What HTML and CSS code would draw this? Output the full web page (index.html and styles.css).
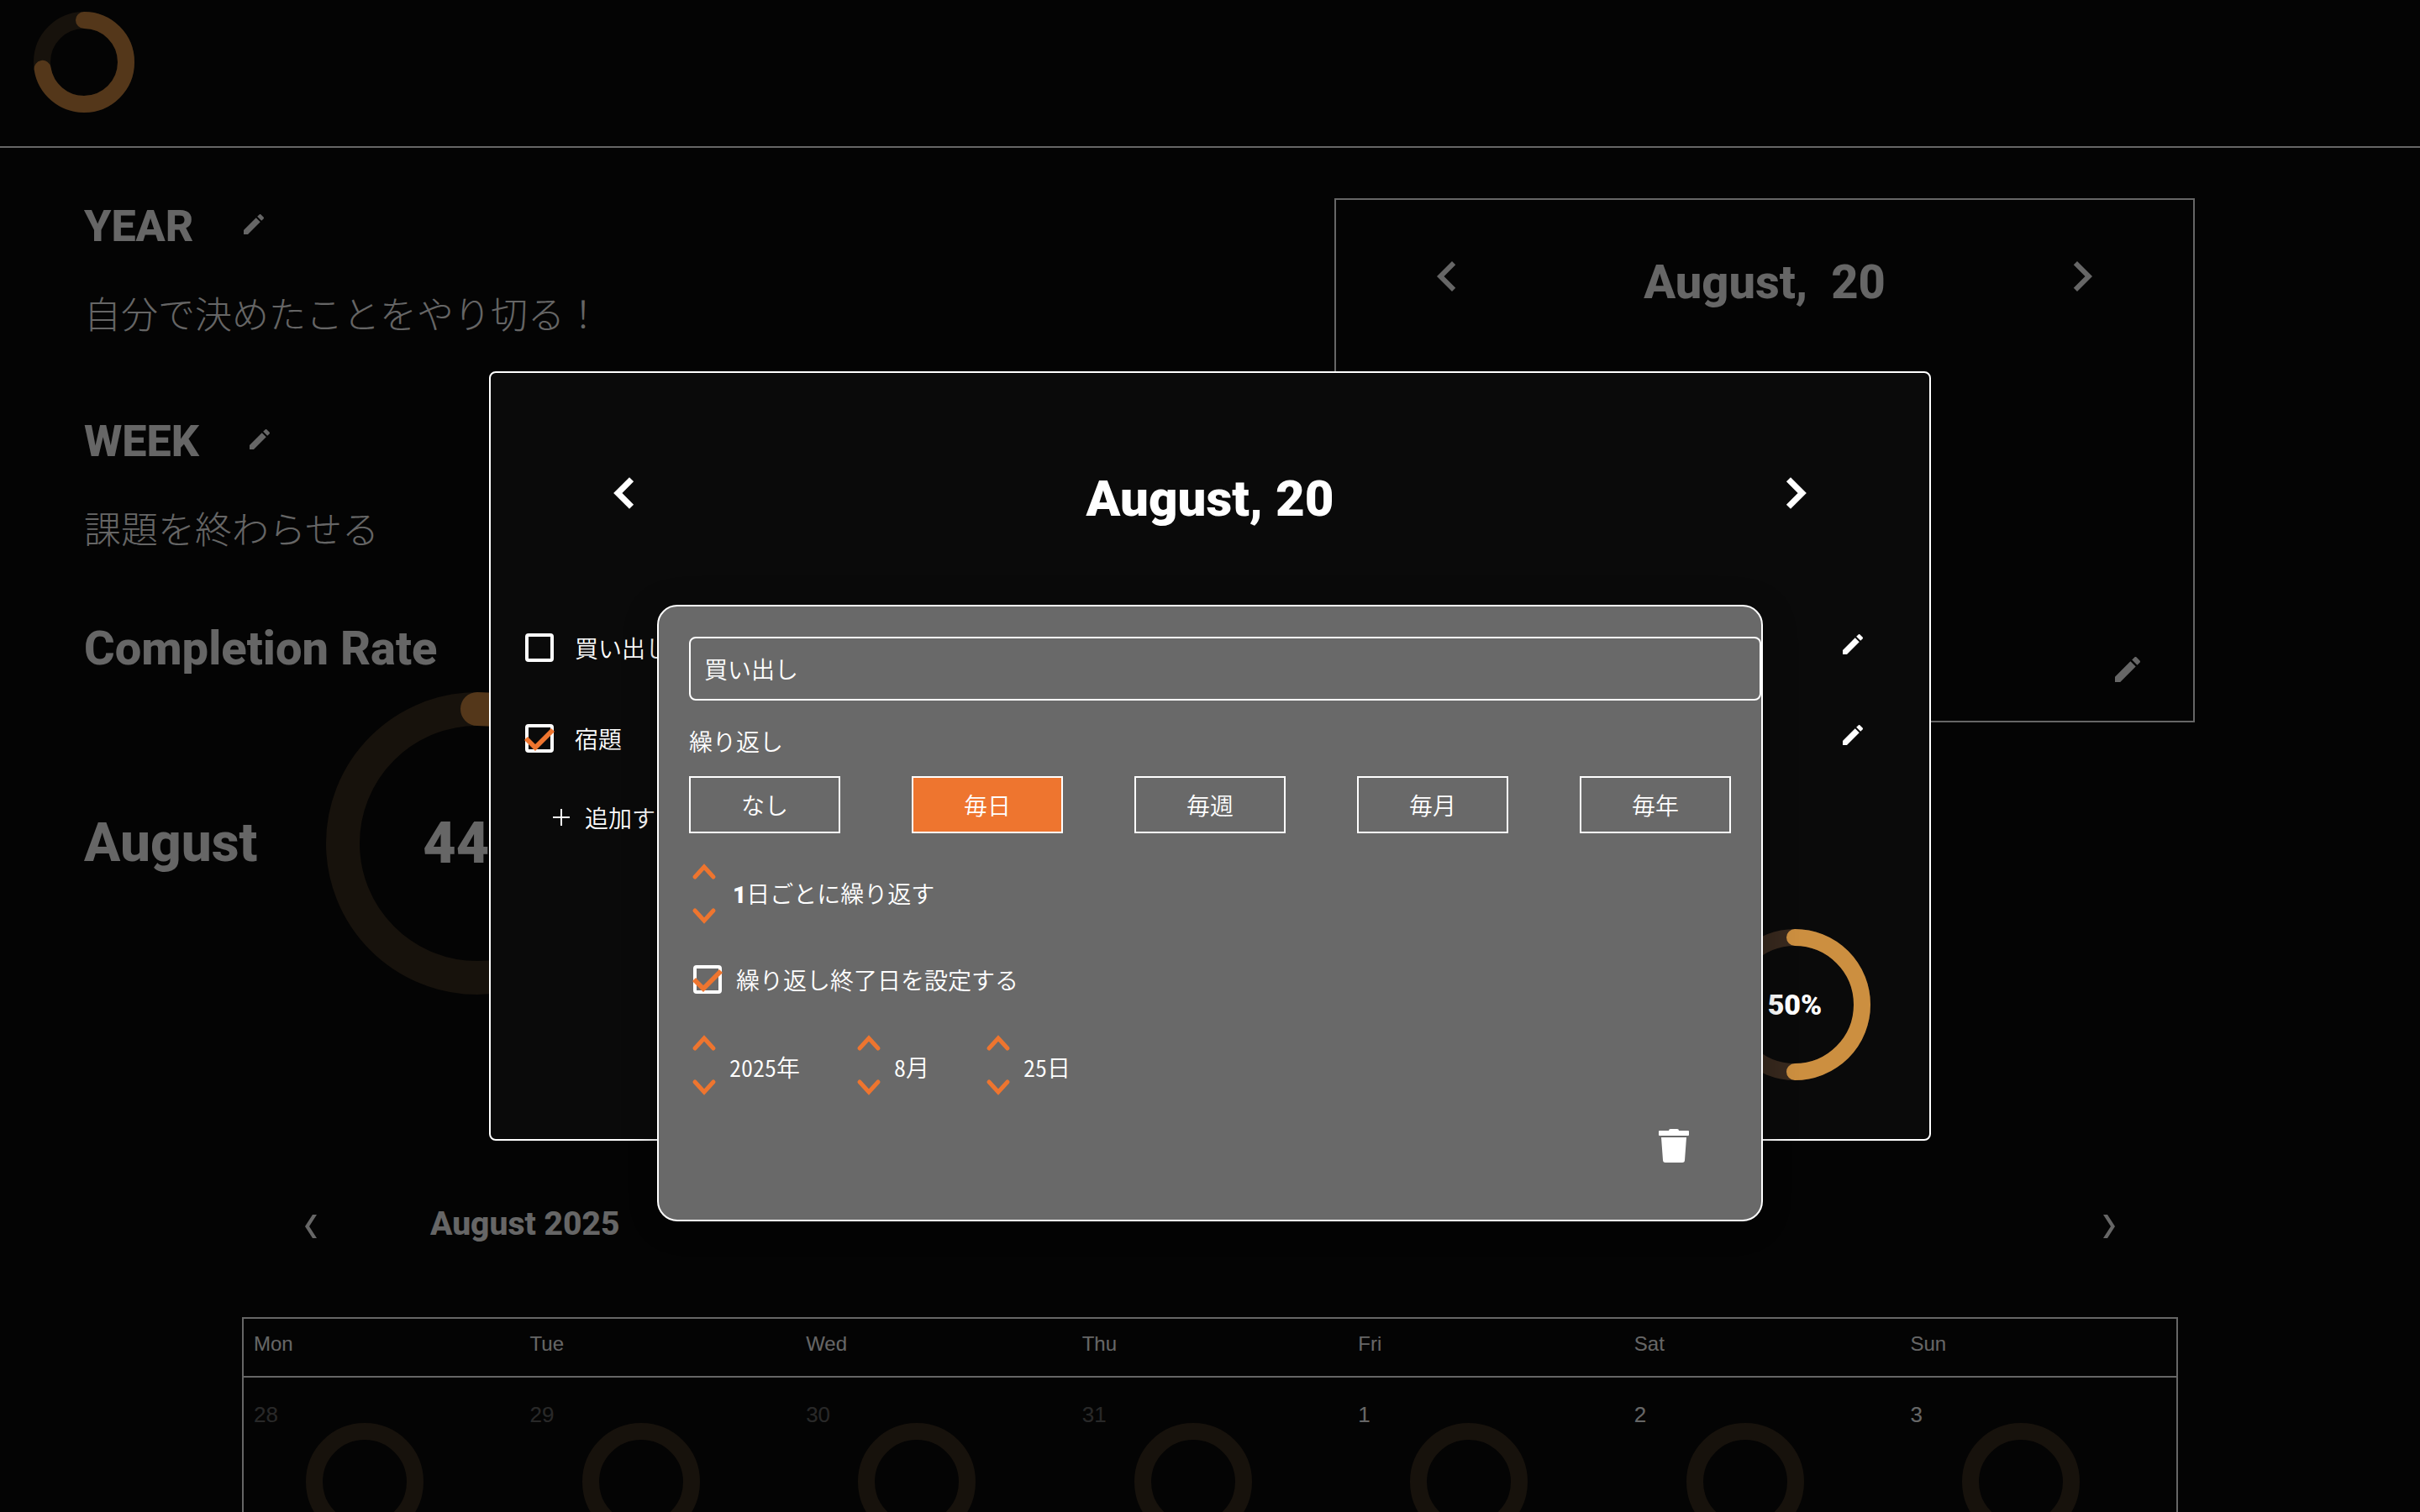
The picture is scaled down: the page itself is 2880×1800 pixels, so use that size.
FILE: index.html
```html
<!DOCTYPE html>
<html lang="ja">
<head>
<meta charset="utf-8">
<meta name="viewport" content="width=device-width, initial-scale=1">
<title>August 2025</title>
<link rel="stylesheet" href="styles.css">
</head>
<body>
<svg class="sprite" aria-hidden="true">
  <symbol id="edit" viewBox="0 0 24 24"><path d="M3 17.25V21h3.75L17.81 9.94l-3.75-3.75L3 17.25zM20.71 7.04c.39-.39.39-1.02 0-1.41l-2.34-2.34c-.39-.39-1.02-.39-1.41 0l-1.83 1.83 3.75 3.75 1.83-1.83z"/></symbol>
  <symbol id="left" viewBox="0 0 24 24"><path d="M15.41 7.41L14 6l-6 6 6 6 1.41-1.41L10.83 12z"/></symbol>
  <symbol id="right" viewBox="0 0 24 24"><path d="M8.59 16.59L10 18l6-6-6-6-1.41 1.41L13.17 12z"/></symbol>
  <symbol id="thin-left" viewBox="0 0 16 28"><path d="M10 0h5L6 14l9 14h-5L1 14z"/></symbol>
  <symbol id="thin-right" viewBox="0 0 16 28"><path d="M6 0H1l9 14L1 28h5l9-14z"/></symbol>
  <symbol id="up" viewBox="0 0 36 20"><path d="M7 16L18 4l11 12"/></symbol>
  <symbol id="down" viewBox="0 0 36 20"><path d="M7 4l11 12L29 4"/></symbol>
  <symbol id="trash" viewBox="0 0 36 40"><path d="M12 2q0-2 2-2h8q2 0 2 2h11q1 0 1 1v4q0 1-1 1H1q-1 0-1-1V3q0-1 1-1zM3 10h30l-2 27q0 3-3 3H8q-3 0-3-3z"/></symbol>
</svg>

<header class="topbar">
  <svg class="ring ring-logo" viewBox="0 0 120 120" role="img" aria-label="Progress">
    <circle class="track" cx="60" cy="60" r="50"/>
    <circle class="value" cx="60" cy="60" r="50" pathLength="100" stroke-dasharray="72.5 100" transform="rotate(-90 60 60)"/>
  </svg>
</header>

<main>
  <div class="dashboard">
    <section class="goals">
      <div class="goal-head"><h2>YEAR</h2><button class="icon-btn" aria-label="Edit year goal"><svg class="icon-sm"><use href="#edit"/></svg></button></div>
      <p class="goal-text">自分で決めたことをやり切る！</p>
      <div class="goal-head goal-next"><h2>WEEK</h2><button class="icon-btn" aria-label="Edit week goal"><svg class="icon-sm"><use href="#edit"/></svg></button></div>
      <p class="goal-text">課題を終わらせる</p>
      <h2 class="rate-title">Completion Rate</h2>
      <div class="rate">
        <h2 class="rate-month">August</h2>
        <div class="gauge">
          <svg class="ring ring-month" viewBox="0 0 360 360" aria-hidden="true">
            <circle class="track" cx="180" cy="180" r="160"/>
            <circle class="value" cx="180" cy="180" r="160" pathLength="100" stroke-dasharray="44 100" transform="rotate(-90 180 180)"/>
          </svg>
          <span class="gauge-label gauge-label-lg">44%</span>
        </div>
      </div>
    </section>
    <section class="day-card">
      <div class="day-nav">
        <button class="icon-btn" aria-label="Previous day"><svg class="icon-lg"><use href="#left"/></svg></button>
        <h2 class="day-title">August,  20</h2>
        <button class="icon-btn" aria-label="Next day"><svg class="icon-lg"><use href="#right"/></svg></button>
      </div>
      <button class="icon-btn card-edit" aria-label="Edit day"><svg class="icon-md"><use href="#edit"/></svg></button>
    </section>
  </div>

  <section class="calendar">
    <div class="calendar-nav">
      <button class="icon-btn" aria-label="Previous month"><svg class="icon-thin"><use href="#thin-left"/></svg></button>
      <h3>August 2025</h3>
      <button class="icon-btn calendar-next" aria-label="Next month"><svg class="icon-thin"><use href="#thin-right"/></svg></button>
    </div>
    <table>
      <thead><tr><th>Mon</th><th>Tue</th><th>Wed</th><th>Thu</th><th>Fri</th><th>Sat</th><th>Sun</th></tr></thead>
      <tbody><tr>
        <td class="outside">28<svg class="ring ring-day" viewBox="0 0 140 140"><circle class="track" cx="70" cy="70" r="60"/></svg></td>
        <td class="outside">29<svg class="ring ring-day" viewBox="0 0 140 140"><circle class="track" cx="70" cy="70" r="60"/></svg></td>
        <td class="outside">30<svg class="ring ring-day" viewBox="0 0 140 140"><circle class="track" cx="70" cy="70" r="60"/></svg></td>
        <td class="outside">31<svg class="ring ring-day" viewBox="0 0 140 140"><circle class="track" cx="70" cy="70" r="60"/></svg></td>
        <td>1<svg class="ring ring-day" viewBox="0 0 140 140"><circle class="track" cx="70" cy="70" r="60"/></svg></td>
        <td>2<svg class="ring ring-day" viewBox="0 0 140 140"><circle class="track" cx="70" cy="70" r="60"/></svg></td>
        <td>3<svg class="ring ring-day" viewBox="0 0 140 140"><circle class="track" cx="70" cy="70" r="60"/></svg></td>
      </tr></tbody>
    </table>
  </section>
</main>

<div class="overlay">
  <div class="modal" role="dialog" aria-label="August, 20">
    <div class="modal-nav">
      <button class="icon-btn" aria-label="Previous day"><svg class="icon-lg icon-bold"><use href="#left"/></svg></button>
      <h2>August, 20</h2>
      <button class="icon-btn" aria-label="Next day"><svg class="icon-lg icon-bold"><use href="#right"/></svg></button>
    </div>
    <ul class="tasks">
      <li><label class="task-label"><input type="checkbox" class="check"><span>買い出し</span></label><button class="icon-btn" aria-label="Edit 買い出し"><svg class="icon-sm"><use href="#edit"/></svg></button></li>
      <li><label class="task-label"><input type="checkbox" class="check" checked><span>宿題</span></label><button class="icon-btn" aria-label="Edit 宿題"><svg class="icon-sm"><use href="#edit"/></svg></button></li>
    </ul>
    <button class="add-task"><svg viewBox="0 0 20 20"><path d="M10 0v20M0 10h20"/></svg>追加する</button>
    <div class="gauge modal-gauge">
      <svg class="ring ring-bright" viewBox="0 0 180 180" aria-hidden="true">
        <circle class="track" cx="90" cy="90" r="80"/>
        <circle class="value" cx="90" cy="90" r="80" pathLength="100" stroke-dasharray="50 100" transform="rotate(-90 90 90)"/>
      </svg>
      <span class="gauge-label">50%</span>
    </div>

    <form class="popup">
      <input class="task-name" type="text" value="買い出し" aria-label="タスク名">
      <p class="field-title">繰り返し</p>
      <div class="repeat">
        <button type="button">なし</button>
        <button type="button" class="selected">毎日</button>
        <button type="button">毎週</button>
        <button type="button">毎月</button>
        <button type="button">毎年</button>
      </div>
      <div class="stepper interval">
        <div class="stepper-btns">
          <button type="button" class="icon-btn" aria-label="増やす"><svg class="step"><use href="#up"/></svg></button>
          <button type="button" class="icon-btn" aria-label="減らす"><svg class="step"><use href="#down"/></svg></button>
        </div>
        <span><b>1</b>日ごとに繰り返す</span>
      </div>
      <label class="end-toggle"><input type="checkbox" class="check" checked><span>繰り返し終了日を設定する</span></label>
      <div class="end-date">
        <div class="stepper">
          <div class="stepper-btns">
            <button type="button" class="icon-btn" aria-label="次の年"><svg class="step"><use href="#up"/></svg></button>
            <button type="button" class="icon-btn" aria-label="前の年"><svg class="step"><use href="#down"/></svg></button>
          </div>
          <span class="date-part">2025年</span>
        </div>
        <div class="stepper">
          <div class="stepper-btns">
            <button type="button" class="icon-btn" aria-label="次の月"><svg class="step"><use href="#up"/></svg></button>
            <button type="button" class="icon-btn" aria-label="前の月"><svg class="step"><use href="#down"/></svg></button>
          </div>
          <span class="date-part">8月</span>
        </div>
        <div class="stepper">
          <div class="stepper-btns">
            <button type="button" class="icon-btn" aria-label="次の日"><svg class="step"><use href="#up"/></svg></button>
            <button type="button" class="icon-btn" aria-label="前の日"><svg class="step"><use href="#down"/></svg></button>
          </div>
          <span class="date-part">25日</span>
        </div>
      </div>
      <button type="button" class="icon-btn trash" aria-label="削除"><svg><use href="#trash"/></svg></button>
    </form>
  </div>
</div>
</body>
</html>
```
FILE: styles.css
```css
* { box-sizing: border-box; }

body {
  margin: 0;
  height: 100vh;
  overflow: hidden;
  background: #0a0a0a;
  color: #fff;
  font-family: "Noto Sans CJK JP", sans-serif;
  font-weight: 350;
  font-size: 28px;
  line-height: 40px;
}

h2, h3, p, ul { margin: 0; padding: 0; }
ul { list-style: none; }
button, input { font: inherit; color: inherit; }

h2, h3 {
  font-family: Roboto, sans-serif;
  font-weight: 800;
  font-size: 56px;
  line-height: 68px;
}

svg { display: block; }
.sprite { position: absolute; width: 0; height: 0; }

.icon-btn {
  display: block;
  padding: 0;
  border: 0;
  background: none;
  fill: currentColor;
  cursor: pointer;
}
.icon-sm { width: 32px; height: 32px; }
.icon-md { width: 40px; height: 40px; }
.icon-lg { width: 72px; height: 72px; }
.icon-thin { width: 16px; height: 28px; }
.icon-bold { stroke: #fff; stroke-width: 0.4; }

/* Progress rings */
.ring { fill: none; stroke-width: 20; flex: none; }
.track { stroke: #3a2d1e; }
.value { stroke: #d28a41; stroke-linecap: round; }
.ring-logo { width: 120px; height: 120px; }
.ring-month { width: 360px; height: 360px; stroke-width: 40; }
.ring-day { width: 140px; height: 140px; margin-left: 62px; }
.ring-bright { width: 180px; height: 180px; }
.ring-bright .track { stroke: #38291e; }
.ring-bright .value { stroke: #cc8f40; }

.gauge { display: grid; place-items: center; }
.gauge > * { grid-area: 1 / 1; }
.gauge-label {
  font-family: Roboto, sans-serif;
  font-weight: 900;
  font-size: 34px;
  line-height: 40px;
}
.gauge-label-lg { font-size: 68px; line-height: 80px; }

/* Header */
.topbar { padding: 14px 40px 40px; border-bottom: 2px solid #fff; }

/* Dashboard */
.dashboard {
  display: flex;
  justify-content: space-between;
  align-items: flex-start;
  padding: 60px 268px 0 100px;
}
.goal-head { display: flex; align-items: center; gap: 56px; }
.goal-head h2 { font-size: 52px; }
.goal-next { margin-top: 88px; }
.goal-head .icon-btn { margin-bottom: 6px; }
.goal-text { margin-top: 36px; font-size: 44px; line-height: 64px; font-weight: 300; }
.rate-title { margin-top: 78px; }
.rate { display: flex; align-items: center; margin-top: 18px; }
.rate-month { width: 288px; font-size: 64px; }

.day-card {
  display: flex;
  flex-direction: column;
  justify-content: space-between;
  width: 41%;
  max-width: 1024px;
  height: 624px;
  padding: 52px 58px 41px 96px;
  border: 2px solid #fff;
}
.day-nav { display: flex; justify-content: space-between; padding-right: 38px; }
.day-nav .icon-btn { margin-top: -2px; }
.day-title { white-space: pre; margin-top: 12px; }
.card-edit { align-self: flex-end; }

/* Calendar */
.calendar { width: 80%; margin: 241px auto 0; }
.calendar-nav { display: flex; align-items: center; height: 60px; padding: 0 74px; }
.calendar-nav h3 { margin: 4px 0 0 134px; font-size: 39px; line-height: 60px; }
.calendar-nav .icon-btn { margin-top: 10px; }
.calendar-nav .calendar-next { margin-left: auto; }

table {
  width: 100%;
  margin-top: 83px;
  border-collapse: separate;
  border-spacing: 0;
  border: 2px solid #fff;
  table-layout: fixed;
  font-family: "Liberation Sans", Arial, sans-serif;
  font-weight: 400;
}
th {
  height: 70px;
  padding: 0 12px 8px;
  border-bottom: 2px solid #fff;
  text-align: left;
  font-weight: 400;
  font-size: 24px;
  line-height: 28px;
}
td { height: 260px; padding: 30px 12px; vertical-align: top; font-size: 26px; line-height: 28px; }
td .ring { margin-top: -4px; }
td.outside { color: rgba(255, 255, 255, 0.4); }

/* Task modal */
.overlay {
  position: fixed;
  inset: 0;
  display: flex;
  align-items: center;
  justify-content: center;
  background: rgba(0, 0, 0, 0.6);
}
.modal {
  position: relative;
  width: 1716px;
  max-width: 96%;
  height: 916px;
  padding: 102px 39px 70px 41px;
  border: 2px solid #fff;
  border-radius: 8px;
  background: #0a0a0a;
}
.modal-nav { display: flex; justify-content: space-between; padding: 0 84px 0 82px; }
.modal-nav h2 { font-weight: 900; font-size: 60px; margin-top: 14px; }
.tasks { margin-top: 109px; }
.tasks li { display: flex; justify-content: space-between; height: 68px; margin-bottom: 40px; padding-right: 36px; }
.task-label { display: flex; gap: 25px; align-items: center; height: 68px; }
.tasks .icon-btn { margin-top: 14px; align-self: flex-start; }
.add-task {
  display: flex;
  align-items: center;
  gap: 18px;
  margin-left: 33px;
  padding: 0;
  border: 0;
  background: none;
}
.add-task svg { width: 20px; height: 20px; stroke: #fff; stroke-width: 2; }
.modal-gauge { position: absolute; right: 70px; bottom: 70px; }

.check {
  position: relative;
  flex: none;
  width: 34px;
  height: 34px;
  margin: 0;
  appearance: none;
  border: 4px solid #fff;
  border-radius: 4px;
}
.check:checked::before {
  content: "";
  position: absolute;
  inset: -5px;
  background: #ee752f;
  clip-path: polygon(4px 16px, 13px 25px, 32px 6px, 36px 10px, 13px 33px, 0 20px);
}

/* Repeat settings popup */
.popup {
  position: absolute;
  top: 276px;
  left: 198px;
  width: 1316px;
  height: 734px;
  padding: 36px;
  border: 2px solid #fff;
  border-radius: 24px;
  background: #696969;
  box-shadow: 0 8px 40px rgba(0, 0, 0, 0.3);
}
.task-name {
  display: block;
  box-sizing: content-box;
  width: 100%;
  height: 72px;
  padding: 0 16px;
  border: 2px solid #fff;
  border-radius: 8px;
  background: none;
}
.field-title { margin: 28px 0 22px; }
.repeat { display: flex; justify-content: space-between; }
.repeat button { width: 180px; height: 68px; padding: 0; border: 2px solid #fff; background: none; }
.repeat .selected { background: #ee752f; }

.stepper { display: flex; align-items: center; gap: 12px; font-feature-settings: "hwid"; }
.stepper-btns { display: flex; flex-direction: column; gap: 32px; }
.step { width: 36px; height: 20px; fill: none; stroke: #ee752f; stroke-width: 5; stroke-linecap: round; }
.date-part { padding-top: 4px; }
.interval { gap: 16px; margin-top: 36px; }
.interval b { font-family: Roboto, sans-serif; font-weight: 900; }
.end-toggle { display: flex; align-items: center; gap: 17px; height: 40px; margin: 46px 0 46px 5px; }
.end-date { display: flex; gap: 64px; }
.trash { position: absolute; right: 86px; bottom: 68px; }
.trash svg { width: 36px; height: 40px; }
```
